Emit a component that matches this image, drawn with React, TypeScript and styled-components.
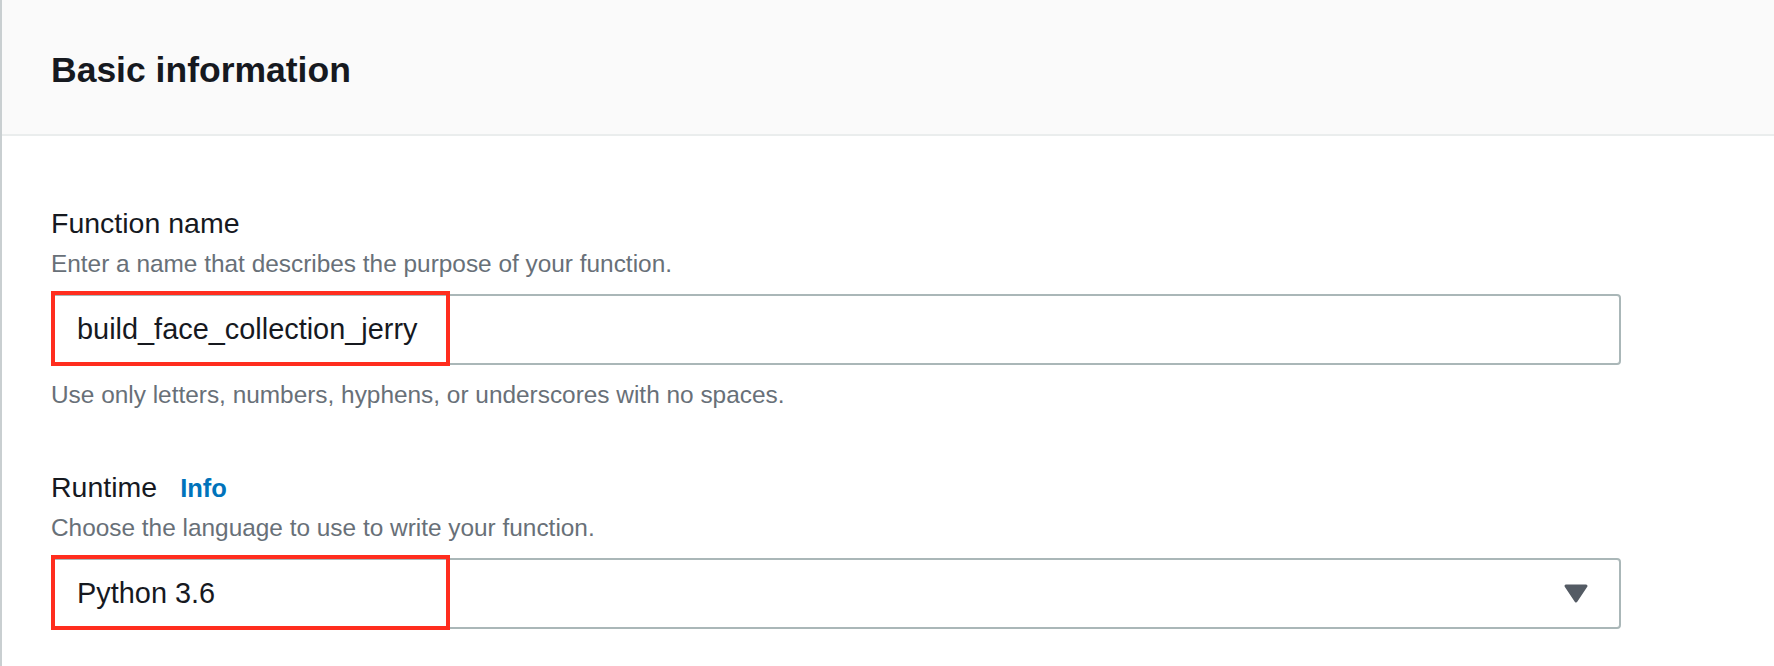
import { createGlobalStyle, styled } from "styled-components";

const GlobalStyle = createGlobalStyle`
    html, body {
        margin: 0;
        padding: 0;
        background: #fff;
    }
    body {
        font-family: "Liberation Sans", Arial, sans-serif;
        color: #16191f;
    }
`

const Panel = styled.section`
    min-height: 666px;
    border-left: 2px solid #c9cfd1;
    box-sizing: border-box;
`

const Header = styled.header`
    height: 136px;
    display: flex;
    align-items: center;
    padding: 6px 0 0 49px;
    box-sizing: border-box;
    background: #fafafa;
    border-bottom: 2px solid #eaeded;
`

const Title = styled.h2`
    margin: 0;
    font-size: 35.5px;
    line-height: 44px;
    font-weight: 700;
    color: #16191f;
`

const Body = styled.div`
    padding: 67px 0 0 49px;
    width: 1570px;
`

const Field = styled.div<{ $gap?: number }>`
    display: flex;
    flex-direction: column;
    margin-top: ${p => p.$gap ?? 0}px;
`

const LabelRow = styled.div`
    display: flex;
    align-items: baseline;
    gap: 23px;
`

const Label = styled.label`
    font-size: 28.5px;
    line-height: 40px;
    color: #16191f;
`

const InfoLink = styled.a`
    font-size: 25.5px;
    font-weight: 700;
    color: #0073bb;
    text-decoration: none;
`

const Hint = styled.div<{ $top?: number }>`
    font-size: 24.4px;
    line-height: 34px;
    color: #687078;
    margin-top: ${p => p.$top ?? 0}px;
`

const Control = styled.div`
    position: relative;
    margin-top: 13px;
`

const Box = styled.div`
    height: 71px;
    box-sizing: border-box;
    border: 2px solid #aab7b8;
    border-radius: 4px;
    display: flex;
    align-items: center;
    justify-content: space-between;
    padding: 0 30px 0 24px;
    font-size: 28.9px;
    color: #16191f;
    background: #fff;
`

// red annotation drawn over the left part of the field
const Highlight = styled.div`
    position: absolute;
    left: 0;
    top: -3px;
    width: 399px;
    height: 75px;
    box-sizing: border-box;
    border: 4px solid #ff2d1e;
    pointer-events: none;
`

const Caret = () => (
    <svg width="26" height="21" viewBox="0 0 26 21">
        <path d="M3 3 L23 3 L13 18 Z" fill="#545b64" stroke="#545b64" strokeWidth="3" strokeLinejoin="round" />
    </svg>
)

export default function App() {
    return (
        <>
            <GlobalStyle />
            <Panel>
                <Header>
                    <Title>Basic information</Title>
                </Header>
                <Body>
                    <Field>
                        <Label>Function name</Label>
                        <Hint $top={4}>Enter a name that describes the purpose of your function.</Hint>
                        <Control>
                            <Box>build_face_collection_jerry</Box>
                            <Highlight />
                        </Control>
                        <Hint $top={13}>Use only letters, numbers, hyphens, or underscores with no spaces.</Hint>
                    </Field>
                    <Field $gap={55}>
                        <LabelRow>
                            <Label>Runtime</Label>
                            <InfoLink>Info</InfoLink>
                        </LabelRow>
                        <Hint $top={4}>Choose the language to use to write your function.</Hint>
                        <Control>
                            <Box>
                                Python 3.6
                                <Caret />
                            </Box>
                            <Highlight />
                        </Control>
                    </Field>
                </Body>
            </Panel>
        </>
    )
}
